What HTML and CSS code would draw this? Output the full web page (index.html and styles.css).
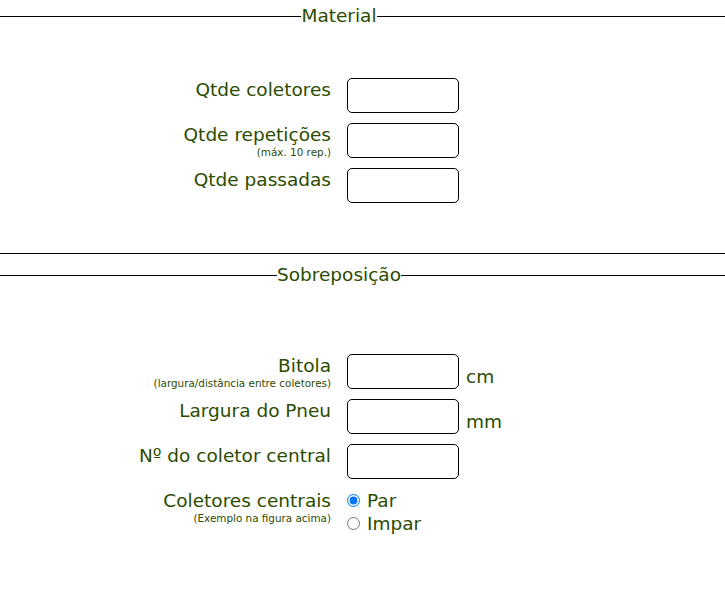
FILE: index.html
```html
<!DOCTYPE html>
<html lang="pt">
<head>
<meta charset="utf-8">
<link rel="stylesheet" href="styles.css">
</head>
<body>
<fieldset class="section sec-material">
  <legend>Material</legend>
  <div class="form">
    <div class="label">Qtde coletores</div>
    <div class="field"><input class="box" type="text"></div>
    <div class="label">Qtde repetições<small>(máx. 10 rep.)</small></div>
    <div class="field"><input class="box" type="text"></div>
    <div class="label">Qtde passadas</div>
    <div class="field"><input class="box" type="text"></div>
  </div>
</fieldset>
<fieldset class="section sec-sobre">
  <legend>Sobreposição</legend>
  <div class="form">
    <div class="label">Bitola<small>(largura/distância entre coletores)</small></div>
    <div class="field"><input class="box" type="text"><span class="unit">cm</span></div>
    <div class="label">Largura do Pneu</div>
    <div class="field"><input class="box" type="text"><span class="unit">mm</span></div>
    <div class="label">Nº do coletor central</div>
    <div class="field"><input class="box" type="text"></div>
    <div class="label">Coletores centrais<small>(Exemplo na figura acima)</small></div>
    <div class="field radios">
      <label class="opt"><input type="radio" name="cc" checked> Par</label>
      <label class="opt"><input type="radio" name="cc"> Impar</label>
    </div>
  </div>
</fieldset>
</body>
</html>
```
FILE: styles.css
```css
html, body {
  margin: 0;
  padding: 0;
  background: #fff;
}
body {
  font-family: "DejaVu Sans", Verdana, sans-serif;
  color: #2b4c00;
  font-size: 18.5px;
}
.section {
  margin: 0;
  padding: 0 47px 0 0;
  border: none;
  border-top: 1px solid #000;
  border-bottom: 1px solid #000;
  min-width: 0;
}
.section legend {
  margin: 0 auto;
  padding: 0;
  font-size: 18.5px;
  line-height: 22px;
}
.sec-material {
  margin-top: 5px;
  padding-top: 51px;
  height: 196px;
}
.sec-sobre {
  margin-top: 10px;
  padding-top: 68px;
  height: 330px;
}
.form {
  display: grid;
  grid-template-columns: 331px auto;
  column-gap: 16px;
  row-gap: 10px;
}
.label {
  text-align: right;
  line-height: 22px;
  padding-top: 1px;
}
.label small {
  display: block;
  font-size: 10.4px;
  line-height: 11px;
  margin-top: 1px;
}
.field {
  display: flex;
  align-items: flex-end;
  gap: 7px;
}
.box {
  box-sizing: border-box;
  width: 112px;
  height: 35px;
  border: 1px solid #000;
  border-radius: 5px;
  margin: 0;
  padding: 0 4px;
  font: inherit;
  background: #fff;
}
.unit {
  line-height: 22px;
  margin-bottom: 1px;
}
.radios {
  flex-direction: column;
  align-items: flex-start;
  gap: 0;
}
.opt {
  display: flex;
  align-items: center;
  line-height: 23px;
}
.opt input {
  margin: 0 7px 0 0;
  width: 13px;
  height: 13px;
}
```
